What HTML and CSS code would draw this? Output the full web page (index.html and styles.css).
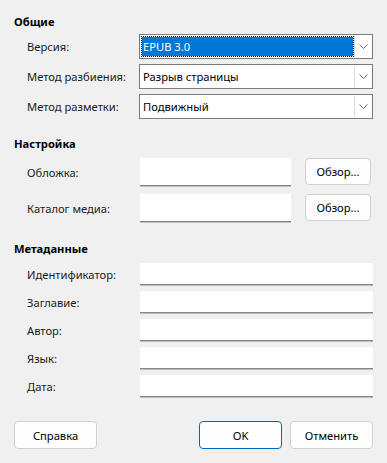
FILE: index.html
```html
<!DOCTYPE html>
<html lang="ru">
<head>
    <meta charset="UTF-8">
    <title>Экспорт EPUB</title>
    <link rel="stylesheet" href="styles.css">
</head>
<body>
    <div class="dialog">
        <section class="group">
            <h2 class="group-title">Общие</h2>
            <div class="rows rows-combo">
                <label class="field-label">Версия:</label>
                <div class="combo combo-focus">
                    <span class="combo-value">EPUB 3.0</span>
                    <span class="combo-btn"><svg width="9" height="5" viewBox="0 0 9 5"><path d="M0.5 0.5 L4.5 4.5 L8.5 0.5" fill="none" stroke="#6a6a6a" stroke-width="1"/></svg></span>
                </div>
                <label class="field-label">Метод разбиения:</label>
                <div class="combo">
                    <span class="combo-value">Разрыв страницы</span>
                    <span class="combo-btn"><svg width="9" height="5" viewBox="0 0 9 5"><path d="M0.5 0.5 L4.5 4.5 L8.5 0.5" fill="none" stroke="#6a6a6a" stroke-width="1"/></svg></span>
                </div>
                <label class="field-label">Метод разметки:</label>
                <div class="combo">
                    <span class="combo-value">Подвижный</span>
                    <span class="combo-btn"><svg width="9" height="5" viewBox="0 0 9 5"><path d="M0.5 0.5 L4.5 4.5 L8.5 0.5" fill="none" stroke="#6a6a6a" stroke-width="1"/></svg></span>
                </div>
            </div>
        </section>

        <section class="group group-settings">
            <h2 class="group-title">Настройка</h2>
            <div class="rows rows-browse">
                <label class="field-label">Обложка:</label>
                <div class="browse-row">
                    <input class="text-input" type="text">
                    <button class="btn btn-browse">Обзор...</button>
                </div>
                <label class="field-label">Каталог медиа:</label>
                <div class="browse-row">
                    <input class="text-input" type="text">
                    <button class="btn btn-browse">Обзор...</button>
                </div>
            </div>
        </section>

        <section class="group group-meta">
            <h2 class="group-title">Метаданные</h2>
            <div class="rows rows-meta">
                <label class="field-label">Идентификатор:</label>
                <input class="text-input" type="text">
                <label class="field-label">Заглавие:</label>
                <input class="text-input" type="text">
                <label class="field-label">Автор:</label>
                <input class="text-input" type="text">
                <label class="field-label">Язык:</label>
                <input class="text-input" type="text">
                <label class="field-label">Дата:</label>
                <input class="text-input" type="text">
            </div>
        </section>

        <div class="buttons">
            <button class="btn">Справка</button>
            <button class="btn btn-default">OK</button>
            <button class="btn">Отменить</button>
        </div>
    </div>
</body>
</html>
```

FILE: styles.css
```css
/* Dialog base */
body {
    margin: 0;
    background-color: #f0f0f0;
    font-family: 'Noto Sans', 'Open Sans', sans-serif;
    font-size: 11.2px;
    color: #000;
}
.dialog {
    width: 387px;
    height: 463px;
    box-sizing: border-box;
    padding: 14px 14px 0 14px;
}
.group-title {
    margin: 0;
    font-size: 11.2px;
    font-weight: bold;
    line-height: 16px;
}
.group-settings {
    margin-top: 17px;
}
.group-meta {
    margin-top: 19px;
}
.rows {
    display: grid;
    align-items: center;
    padding-left: 13px;
}
.rows-combo {
    margin-top: 4px;
    grid-template-columns: 112px 234px;
    grid-auto-rows: 25px;
    row-gap: 5px;
}
.rows-browse {
    margin-top: 6px;
    grid-template-columns: 113px 1fr;
    grid-auto-rows: 28px;
    row-gap: 8px;
}
.rows-meta {
    margin-top: 6px;
    grid-template-columns: 113px 233px;
    grid-auto-rows: 22px;
    row-gap: 6px;
}
.field-label {
    white-space: nowrap;
    color: #1a1a1a;
}

/* Combo boxes */
.combo {
    display: flex;
    height: 25px;
    box-sizing: border-box;
    border: 1px solid #7a7a7a;
    background-color: #fff;
}
.combo-value {
    flex: 1;
    display: flex;
    align-items: center;
    padding-left: 2px;
    margin: 1px 0 1px 1px;
}
.combo-focus .combo-value {
    background-color: #0078d7;
    background-clip: padding-box;
    color: #fff;
    border: 1px dotted #000;
    padding-left: 1px;
}
.combo-btn {
    width: 17px;
    display: flex;
    align-items: center;
    justify-content: center;
    border-left: 1px solid #dadada;
    margin: 1px 0;
}

/* Text inputs */
.text-input {
    display: block;
    height: 100%;
    width: 100%;
    box-sizing: border-box;
    margin: 0;
    border: none;
    border-bottom: 1px solid #868686;
    box-shadow: 0 1px 0 #bdbdbd;
    background-color: #fff;
    font: inherit;
}
.browse-row {
    display: flex;
    height: 28px;
    gap: 14px;
}
.browse-row .text-input {
    width: 151px;
}

/* Buttons */
.btn {
    width: 83px;
    height: 28px;
    box-sizing: border-box;
    border: 1px solid #d0d0d0;
    border-radius: 4px;
    background-color: #fdfdfd;
    font: inherit;
    color: #000;
    padding: 0;
}
.btn-browse {
    width: 66px;
    height: 27px;
}
.btn-default {
    border-color: #0067c0;
    margin-left: auto;
}
.buttons {
    display: flex;
    gap: 8px;
    margin-top: 24px;
}
```
